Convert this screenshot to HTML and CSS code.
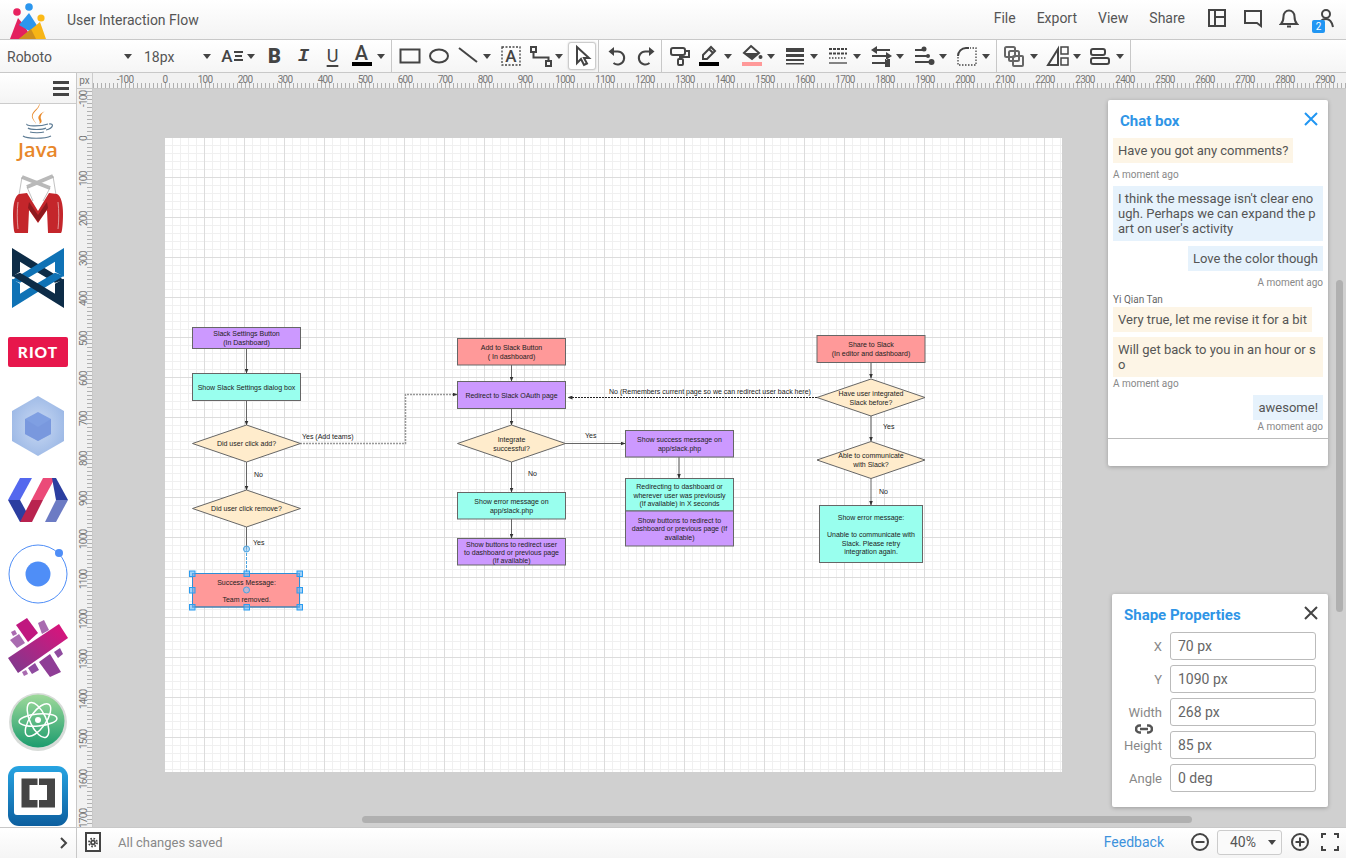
FILE: index.html
```html
<!DOCTYPE html>
<html lang="en">
<head>
<meta charset="utf-8">
<title>User Interaction Flow</title>
<link rel="stylesheet" href="styles.css">
</head>
<body>
<div class="app">
  <header class="topbar">
    <svg class="brand" viewBox="0 0 36 36" width="36" height="36">
      <circle cx="7" cy="9" r="3.8" fill="#e8225f"/>
      <circle cx="19" cy="4" r="3.8" fill="#2b96ee"/>
      <circle cx="31" cy="15" r="3.6" fill="#fbb917"/>
      <polygon points="0,36 8,15 14,22 22,36" fill="#e3215f"/>
      <polygon points="9,22 19,10 28,24 21,29" fill="#2b96ee"/>
      <polygon points="9,36 24,24 30,19 36,36" fill="#f7b516"/>
      <polygon points="9,36 21,26 26,36" fill="#cf8f1e"/>
    </svg>
    <div class="doc-title">User Interaction Flow</div>
    <nav class="menu">
      <span>File</span><span>Export</span><span>View</span><span>Share</span>
    </nav>
    <div class="head-icons">
      <svg class="hi" viewBox="0 0 20 20"><path d="M2 2h16v16H2zM8 2v16M8 9h10"/></svg>
      <svg class="hi" viewBox="0 0 20 20"><path d="M2 3h16v15l-4-3H2z"/></svg>
      <svg class="hi" viewBox="0 0 20 20"><path d="M2 16c2-2 2.500-4 2.500-7.500C4.500 5 7 2.500 10 2.500s5.500 2.500 5.500 6c0 3.500.5 5.500 2.500 7.500zM8 18.500h4"/></svg>
      <div class="user">
        <svg class="hi" viewBox="0 0 20 20"><circle cx="11" cy="6" r="4"/><path d="M3 19c1-5 4-8 8-8s6 3 7 8"/></svg>
        <span class="badge">2</span>
      </div>
    </div>
  </header>

  <div class="toolbar">
    <div class="tb-select tb-font"><span>Roboto</span><i class="caret"></i></div>
    <div class="tb-select tb-size"><span>18px</span><i class="caret"></i></div>
    <div class="tool tool-ae"><span class="gl-ae">A</span><svg class="ic ic-ae" viewBox="0 0 9 12"><path d="M0 2h9M1 6h7M0 10h9"/></svg></div><i class="caret cc"></i>
    <div class="tool"><span class="gl-b">B</span></div>
    <div class="tool"><span class="gl-i">I</span></div>
    <div class="tool"><span class="gl-u">U</span></div>
    <div class="tool tool-a"><span class="gl-a">A</span><b class="colorbar"></b></div><i class="caret cc"></i>
    <div class="sep"></div>
    <div class="tool"><svg class="ic" viewBox="0 0 24 24"><rect x="2.500" y="5.500" width="19" height="13"/></svg></div>
    <div class="tool"><svg class="ic" viewBox="0 0 24 24"><ellipse cx="12" cy="12" rx="9" ry="6.500"/></svg></div>
    <div class="tool"><svg class="ic" viewBox="0 0 24 24"><path d="M3 4l18 14"/></svg></div><i class="caret cc"></i>
    <div class="tool"><svg class="ic" viewBox="0 0 24 24"><rect class="thin dash" x="3" y="3" width="18" height="18"/><text class="ic-text" x="12" y="18">A</text></svg></div>
    <div class="tool"><svg class="ic" viewBox="0 0 24 24"><rect x="3" y="3" width="5" height="5"/><rect x="18" y="17" width="5" height="5"/><path d="M5.500 8v5.500h15V17"/></svg></div><i class="caret cc"></i>
    <div class="tool tool-on"><svg class="ic" viewBox="0 0 24 24"><path d="M7 3v16l4-4 3 6 3-1.500-3-5.500h5z"/></svg></div>
    <div class="sep sep-b"></div>
    <div class="tool"><svg class="ic" viewBox="0 0 24 24"><path d="M8 7.500h4.500a6.500 6.500 0 1 1-4 11.500"/><path class="solid" d="M9 3v9L3.500 7.500z"/></svg></div>
    <div class="tool"><svg class="ic" viewBox="0 0 24 24"><path d="M16 7.500h-4.500a6.500 6.500 0 1 0 4 11.500"/><path class="solid" d="M15 3v9l5.500-4.500z"/></svg></div>
    <div class="sep"></div>
    <div class="tool"><svg class="ic" viewBox="0 0 24 24"><rect x="3" y="4" width="14" height="7" rx="2"/><path d="M17 7h4v6h-9v2"/><rect x="10" y="15" width="5" height="6" rx="1"/></svg></div>
    <div class="tool"><svg class="ic" viewBox="0 0 24 24"><path d="M6 11l8-8 4 4-8 8H6zM12 5l4 4"/><rect class="black" x="2" y="18" width="20" height="4"/></svg></div><i class="caret cc"></i>
    <div class="tool"><svg class="ic" viewBox="0 0 24 24"><path d="M11 2l8 7-7 6-8-6z"/><path class="solid" d="M4 9h15l-7 6z"/><circle class="solid" cx="20.500" cy="13" r="2"/><rect class="pink-bar" x="2" y="18" width="20" height="4"/></svg></div><i class="caret cc"></i>
    <div class="tool"><svg class="ic" viewBox="0 0 24 24"><rect class="solid" x="3" y="4" width="18" height="4"/><rect class="solid" x="3" y="10" width="18" height="3"/><rect class="solid" x="3" y="15" width="18" height="2"/><rect class="solid" x="3" y="19" width="18" height="1.500"/></svg></div><i class="caret cc"></i>
    <div class="tool"><svg class="ic" viewBox="0 0 24 24"><path class="thin dash-s" d="M3 5h18"/><path class="thin dash-s" d="M3 9.500h18"/><path class="thin dot" d="M3 14h18"/><path class="thin" d="M3 19h18"/></svg></div><i class="caret cc"></i>
    <div class="tool"><svg class="ic" viewBox="0 0 24 24"><path d="M6 6h15M3 12h15M3 19h15"/><path class="solid" d="M8 2v8L2 6zM17 8l6 4-6 4zM16 15v8h5v-8z"/></svg></div><i class="caret cc"></i>
    <div class="tool"><svg class="ic" viewBox="0 0 24 24"><path d="M3 6h10M3 12h13M3 18h16"/><circle class="solid" cx="12" cy="5" r="2.500"/><circle class="solid" cx="16" cy="12" r="2"/><circle class="solid" cx="19.500" cy="18" r="3"/></svg></div><i class="caret cc"></i>
    <div class="tool"><svg class="ic" viewBox="0 0 24 24"><path d="M3 12a8 8 0 0 1 8-8h3"/><path class="thin dot" d="M3 13v8h18V4h-6"/></svg></div><i class="caret cc"></i>
    <div class="sep"></div>
    <div class="tool"><svg class="ic ic-grey" viewBox="0 0 24 24"><rect x="2" y="3" width="10" height="10" rx="1.500"/><rect x="6" y="7" width="10" height="10" rx="1.500"/><rect x="10" y="12" width="10" height="10" rx="1"/></svg></div><i class="caret cc"></i>
    <div class="tool"><svg class="ic" viewBox="0 0 24 24"><path d="M2 21L12 5v16zM7 21h5"/><rect class="thin2" x="15" y="3" width="7" height="7"/><rect class="thin2" x="15" y="14" width="7" height="7"/></svg></div><i class="caret cc"></i>
    <div class="tool"><svg class="ic" viewBox="0 0 24 24"><rect x="2" y="5" width="14" height="6" rx="2"/><rect x="2" y="14" width="18" height="6" rx="2"/></svg></div><i class="caret cc"></i>
    <div class="sep"></div>
  </div>

  <div class="main">
    <aside class="side">
      <div class="side-head">
        <svg class="burger" viewBox="0 0 16 15"><path d="M0 0h16v3H0zM0 6h16v3H0zM0 12h16v3H0z"/></svg>
      </div>
      <div class="libs">
        <svg class="lib" viewBox="0 0 60 60">
          <path class="j-flame" d="M31 3c3 5-8 9-6 15 1 3 3 4 3 6-1-3-5-5-4-9 1-5 8-7 7-12z"/>
          <path class="j-flame" d="M37 11c-5 3-8 5-6 9 1 2 1 3 0 4 3-1 3-3 2-5-1-3 1-6 4-8z"/>
          <path class="j-cup" d="M19 24c-2 2 12 3 21 0M20 28c2 2 15 2 18 0M22 32c3 1 11 1 14 0M41 24c5-1 5 4-3 6M15 36c4 3 22 3 28 0"/>
          <text class="j-text" x="30" y="57">Java</text>
        </svg>
        <svg class="lib" viewBox="0 0 60 60">
          <path class="m-bars" d="M14 3l28 11M45 2L19 13" />
          <path class="m-str" d="M14 3l-3 18M45 2l3 19M19 13l6 14M42 14l-7 13"/>
          <path fill="#c4262b" d="M11 20l8-1 11 18 11-18 8 1c4 2 6 10 6 20 0 10-1 19-2 19H40l-1-23-9 13-9-13-1 23H7c-1 0-2-9-2-19 0-10 2-18 6-20z"/>
          <path fill="#8e1a1f" d="M21 28l9 13 9-13 1 6-10 14-10-14z"/>
          <path class="m-seam" d="M10 28c-1 8-1 18 0 27M50 28c1 8 1 18 0 27"/>
        </svg>
        <svg class="lib" viewBox="0 0 60 60">
          <polygon fill="#0d2c47" points="4,0 56,32 47,34.700 20,18.700 12,13.700 12,23.700 4,28.700"/>
          <polygon fill="#0f72b5" points="56,0 4,32 12,34.700 38.700,18.700 47,13.700 47,23.700 56,28.700"/>
          <polygon fill="#0f72b5" points="4,60 56,27.700 47,24.700 20,40.700 12,45.700 12,35.700 4,30.700"/>
          <polygon fill="#0d2c47" points="56,60 4,27.700 12,24.700 38.700,40.700 47,45.700 47,35.700 56,30.700"/>
        </svg>
        <svg class="lib" viewBox="0 0 60 60">
          <rect x="0" y="15" width="60" height="30" rx="2" fill="#e7174c"/>
          <text class="riot" x="30" y="36">RIOT</text>
        </svg>
        <svg class="lib" viewBox="0 0 60 60">
          <defs>
            <radialGradient id="wp" cx="50%" cy="50%" r="55%"><stop offset="0" stop-color="#c9d9f3"/><stop offset="1" stop-color="#9db9e6"/></radialGradient>
          </defs>
          <polygon fill="url(#wp)" points="30,0 56,15 56,45 30,60 4,45 4,15"/>
          <polygon fill="#7f9fe2" points="30,16 43,23 43,38 30,45 17,38 17,23"/>
          <path fill="#7595dc" d="M30 31l13-8v15l-13 7zM30 31L17 23v15l13 7z" opacity=".6"/>
        </svg>
        <svg class="lib" viewBox="0 0 60 60">
          <polygon fill="#5468ee" points="12,8 24,8 12,30 0,30"/>
          <polygon fill="#2b3ea0" points="0,30 12,30 24,52 12,52"/>
          <polygon fill="#eb4a78" points="35,8 47,8 35,30 23.500,30"/>
          <polygon fill="#b9234f" points="23.500,30 35,30 24,52 12,52"/>
          <polygon fill="#2b3ea0" points="44,8 48,8 60,30 48,30"/>
          <polygon fill="#6c7bc4" points="48,30 60,30 48,52 37,52"/>
        </svg>
        <svg class="lib" viewBox="0 0 60 60">
          <circle class="io-ring" cx="30" cy="30" r="29"/>
          <circle cx="30" cy="30" r="12.500" fill="#4f8ef7"/>
          <circle cx="51" cy="9" r="4" fill="#4f8ef7"/>
        </svg>
        <svg class="lib" viewBox="0 0 60 60">
          <defs>
            <linearGradient id="xg" x1="0" y1="1" x2="1" y2="0"><stop offset="0" stop-color="#7a3c8f"/><stop offset="1" stop-color="#e0107a"/></linearGradient>
          </defs>
          <polygon fill="url(#xg)" points="0,40 51,6 60,20 10,55"/>
          <polygon fill="#c0177f" points="8,7 19,0 30,15 20,24"/>
          <polygon fill="#8f3d96" points="31,44 42,36 53,54 42,59"/>
          <polygon fill="#a96bb0" points="30,5 36,2 41,12 34,16"/>
          <polygon fill="#a96bb0" points="2,22 11,16 17,25 9,30"/>
          <polygon fill="#8f4b9f" points="46,34 52,30 55,36 50,40"/>
          <polygon fill="#8f4b9f" points="20,50 27,45 31,52 24,56"/>
          <polygon fill="#a96bb0" points="3,14 7,12 9,16 5,18"/>
          <polygon fill="#a96bb0" points="14,54 18,52 20,56 16,58"/>
        </svg>
        <svg class="lib" viewBox="0 0 60 60">
          <defs>
            <linearGradient id="at" x1="0" y1="0" x2="0" y2="1"><stop offset="0" stop-color="#9ed99a"/><stop offset="1" stop-color="#1c9c6e"/></linearGradient>
          </defs>
          <circle cx="30" cy="30" r="29" fill="#d8dcd9"/>
          <circle cx="30" cy="29" r="26.500" fill="url(#at)"/>
          <ellipse class="at" cx="30" cy="28" rx="8" ry="19" transform="rotate(-25 30 28)"/>
          <ellipse class="at" cx="30" cy="28" rx="8" ry="19" transform="rotate(35 30 28)"/>
          <ellipse class="at" cx="30" cy="28" rx="6" ry="19" transform="rotate(85 30 28)"/>
          <circle cx="30" cy="28" r="3" fill="#fff"/>
        </svg>
        <svg class="lib" viewBox="0 0 60 60">
          <defs>
            <linearGradient id="br" x1="0" y1="0" x2="0" y2="1"><stop offset="0" stop-color="#27a4e2"/><stop offset="1" stop-color="#0d5f9f"/></linearGradient>
          </defs>
          <rect width="60" height="60" rx="11" fill="url(#br)"/>
          <rect x="6" y="6" width="48" height="43" rx="3" fill="#fff"/>
          <path fill="#454545" d="M13.500 12.500H29.500V19H21.500V34H29.500V41.500H13.500zM31 12.500H47V41.500H31V34H39V19H31z"/>
        </svg>
      </div>
    </aside>

    <section class="workspace">
      <div class="ruler-h">
        <span class="ruler-unit">px</span>
        <div class="ruler-h-track">
          <span>-100</span><span>0</span><span>100</span><span>200</span><span>300</span><span>400</span><span>500</span><span>600</span><span>700</span><span>800</span><span>900</span><span>1000</span><span>1100</span><span>1200</span><span>1300</span><span>1400</span><span>1500</span><span>1600</span><span>1700</span><span>1800</span><span>1900</span><span>2000</span><span>2100</span><span>2200</span><span>2300</span><span>2400</span><span>2500</span><span>2600</span><span>2700</span><span>2800</span><span>2900</span>
        </div>
      </div>
      <div class="stage">
        <div class="ruler-v">
          <div class="ruler-v-track">
            <span>-100</span><span>0</span><span>100</span><span>200</span><span>300</span><span>400</span><span>500</span><span>600</span><span>700</span><span>800</span><span>900</span><span>1000</span><span>1100</span><span>1200</span><span>1300</span><span>1400</span><span>1500</span><span>1600</span><span>1700</span>
          </div>
        </div>
        <div class="canvas">
          <div class="paper">
            <svg class="diagram" viewBox="165 138 897 634" width="897" height="634">
              <defs>
                <marker id="ah" markerWidth="5" markerHeight="4" refX="4.500" refY="2" orient="auto" markerUnits="userSpaceOnUse"><path d="M0 0l5 2-5 2z" fill="#333"/></marker>
              </defs>
              <path class="edge" marker-end="url(#ah)" d="M246.500 349v24"/>
              <path class="edge" marker-end="url(#ah)" d="M246.500 400v25"/>
              <path class="edge" marker-end="url(#ah)" d="M246.500 462v28"/>
              <path class="edge" d="M246.500 527v22"/>
              <path class="edge-sel" d="M246.500 549v41"/>
              <path class="edge-dash" marker-end="url(#ah)" d="M300 443.500h105.500V394.500H457"/>
              <path class="edge" marker-end="url(#ah)" d="M511.500 365v16"/>
              <path class="edge" marker-end="url(#ah)" d="M511.500 408v17"/>
              <path class="edge" marker-end="url(#ah)" d="M511.500 462v30"/>
              <path class="edge" marker-end="url(#ah)" d="M511.500 519v19"/>
              <path class="edge" marker-end="url(#ah)" d="M565 443.500h60"/>
              <path class="edge edge-w" marker-end="url(#ah)" d="M679 457v21"/>
              <path class="edge-blk" marker-end="url(#ah)" d="M817 397.500H568"/>
              <path class="edge edge-w" marker-end="url(#ah)" d="M871 362v16"/>
              <path class="edge edge-w" marker-end="url(#ah)" d="M871 416v25"/>
              <path class="edge" marker-end="url(#ah)" d="M871 478v27"/>

              <rect class="n purple" x="192.500" y="327.500" width="108" height="21"/>
              <text class="t" x="246.500" y="336">Slack Settings Button</text>
              <text class="t" x="246.500" y="345">(In Dashboard)</text>
              <rect class="n teal" x="192.500" y="373.500" width="108" height="27"/>
              <text class="t" x="246.500" y="390">Show Slack Settings dialog box</text>
              <polygon class="n cream" points="192.500,443.500 246.500,425 300.500,443.500 246.500,462"/>
              <text class="t" x="246.500" y="446">Did user click add?</text>
              <polygon class="n cream" points="192.500,508.500 246.500,490 300.500,508.500 246.500,527"/>
              <text class="t" x="246.500" y="511">Did user click remove?</text>
              <rect class="n pink" x="192.500" y="573.500" width="107" height="33.500"/>
              <text class="t" x="246.500" y="585">Success Message:</text>
              <text class="t" x="246.500" y="602">Team removed.</text>

              <rect class="n pink" x="457.500" y="338.500" width="108" height="26.500"/>
              <text class="t" x="511.500" y="350">Add to Slack Button</text>
              <text class="t" x="511.500" y="359">( In dashboard)</text>
              <rect class="n purple" x="457.500" y="381.500" width="108" height="27"/>
              <text class="t" x="511.500" y="398">Redirect to Slack OAuth page</text>
              <polygon class="n cream" points="457.500,443.500 511.500,425 565.500,443.500 511.500,462"/>
              <text class="t" x="511.500" y="442">Integrate</text>
              <text class="t" x="511.500" y="451">successful?</text>
              <rect class="n teal" x="457.500" y="492.500" width="108" height="26.500"/>
              <text class="t" x="511.500" y="504">Show error message on</text>
              <text class="t" x="511.500" y="513">app/slack.php</text>
              <rect class="n purple" x="457.500" y="538.500" width="108" height="26.500"/>
              <text class="t" x="511.500" y="547">Show buttons to redirect user</text>
              <text class="t" x="511.500" y="554.500">to dashboard or previous page</text>
              <text class="t" x="511.500" y="563">(If available)</text>

              <rect class="n purple" x="625.500" y="430.500" width="108" height="26.500"/>
              <text class="t" x="679.500" y="442">Show success message on</text>
              <text class="t" x="679.500" y="451">app/slack.php</text>
              <rect class="n teal" x="625.500" y="478.500" width="108" height="32.500"/>
              <text class="t" x="679.500" y="489">Redirecting to dashboard or</text>
              <text class="t" x="679.500" y="498">wherever user was previously</text>
              <text class="t" x="679.500" y="506">(If available) in X seconds</text>
              <rect class="n purple" x="625.500" y="511" width="108" height="35"/>
              <text class="t" x="679.500" y="523">Show buttons to redirect to</text>
              <text class="t" x="679.500" y="531">dashboard or previous page (If</text>
              <text class="t" x="679.500" y="540">available)</text>

              <rect class="n pink" x="817" y="335.500" width="108" height="27"/>
              <text class="t" x="871" y="347">Share to Slack</text>
              <text class="t" x="871" y="356">(In editor and dashboard)</text>
              <polygon class="n cream" points="817,397.500 871,379 925,397.500 871,416"/>
              <text class="t" x="871" y="396">Have user integrated</text>
              <text class="t" x="871" y="405">Slack before?</text>
              <polygon class="n cream" points="817,460 871,441.500 925,460 871,478.500"/>
              <text class="t" x="871" y="458">Able to communicate</text>
              <text class="t" x="871" y="467">with Slack?</text>
              <rect class="n teal" x="819.500" y="505.500" width="103" height="57"/>
              <text class="t" x="871" y="520">Show error message:</text>
              <text class="t" x="871" y="537">Unable to communicate with</text>
              <text class="t" x="871" y="546">Slack. Please retry</text>
              <text class="t" x="871" y="554">integration again.</text>

              <text class="l" x="302" y="438.500">Yes (Add teams)</text>
              <text class="l" x="254" y="476.500">No</text>
              <text class="l" x="253" y="544.500">Yes</text>
              <text class="l" x="585" y="438">Yes</text>
              <text class="l" x="528" y="476">No</text>
              <text class="l" x="609" y="393.500">No (Remembers current page so we can redirect user back here)</text>
              <text class="l" x="883" y="429">Yes</text>
              <text class="l" x="879" y="494">No</text>

              <circle class="hd-c" cx="246.500" cy="549" r="3"/>
              <circle class="hd-c" cx="246.500" cy="590" r="3"/>
              <rect class="sel" x="192.500" y="573.500" width="107" height="33.500"/>
              <rect class="hd" x="189.500" y="571" width="5.500" height="5.500"/>
              <rect class="hd" x="244" y="571" width="5.500" height="5.500"/>
              <rect class="hd" x="297" y="571" width="5.500" height="5.500"/>
              <rect class="hd" x="189.500" y="587.500" width="5.500" height="5.500"/>
              <rect class="hd" x="297" y="587.500" width="5.500" height="5.500"/>
              <rect class="hd" x="189.500" y="604.500" width="5.500" height="5.500"/>
              <rect class="hd" x="244" y="604.500" width="5.500" height="5.500"/>
              <rect class="hd" x="297" y="604.500" width="5.500" height="5.500"/>
            </svg>
          </div>
        </div>

        <div class="scroll-v"></div>
        <div class="scroll-h"></div>

        <div class="panel chat">
          <div class="panel-head">
            <h2 class="panel-title">Chat box</h2>
            <svg class="panel-x x-blue" viewBox="0 0 14 14"><path d="M1 1l12 12M13 1L1 13"/></svg>
          </div>
          <div class="msgs">
            <div class="msg them">Have you got any comments?</div>
            <div class="ts">A moment ago</div>
            <div class="msg me-l">I think the message isn't clear enough. Perhaps we can expand the part on user's activity</div>
            <div class="msg me">Love the color though</div>
            <div class="ts ts-r">A moment ago</div>
            <div class="who">Yi Qian Tan</div>
            <div class="msg them">Very true, let me revise it for a bit</div>
            <div class="msg them">Will get back to you in an hour or so</div>
            <div class="ts ts-near">A moment ago</div>
            <div class="msg me">awesome!</div>
            <div class="ts ts-r ts-near">A moment ago</div>
          </div>
          <div class="chat-input"></div>
        </div>

        <div class="panel props">
          <div class="panel-head">
            <h2 class="panel-title">Shape Properties</h2>
            <svg class="panel-x x-dark" viewBox="0 0 14 14"><path d="M1 1l12 12M13 1L1 13"/></svg>
          </div>
          <div class="fields">
            <div class="field"><label>X</label><div class="val">70 px</div></div>
            <div class="field"><label>Y</label><div class="val">1090 px</div></div>
            <div class="field"><label>Width</label><div class="val">268 px</div></div>
            <div class="field"><label>Height</label><div class="val">85 px</div></div>
            <div class="field"><label>Angle</label><div class="val">0 deg</div></div>
            <svg class="link" viewBox="0 0 18 10"><path d="M6 1.500H4.500a3.500 3.500 0 0 0 0 7H6M12 1.500h1.500a3.500 3.500 0 0 1 0 7H12M5 5h8"/></svg>
          </div>
        </div>
      </div>
    </section>
  </div>

  <footer class="status">
    <div class="status-side">
      <svg class="chev" viewBox="0 0 8 12"><path d="M1 1l5 5-5 5"/></svg>
    </div>
    <div class="status-main">
      <svg class="page-ic" viewBox="0 0 16 20"><rect class="page-frame" x="1" y="1" width="14" height="18"/><circle class="gear-ring" cx="8" cy="10.500" r="4"/><circle class="gear-core" cx="8" cy="10.500" r="2.800"/><circle class="gear-hole" cx="8" cy="10.500" r="1.100"/></svg>
      <span class="saved">All changes saved</span>
      <a class="feedback">Feedback</a>
      <svg class="zoom-ic zoom-out" viewBox="0 0 18 18"><circle cx="9" cy="9" r="8"/><path d="M4.500 9h9"/></svg>
      <div class="zoom-sel"><span>40%</span><i class="caret"></i></div>
      <svg class="zoom-ic" viewBox="0 0 18 18"><circle cx="9" cy="9" r="8"/><path d="M4.500 9h9M9 4.500v9"/></svg>
      <svg class="zoom-ic full" viewBox="0 0 18 18"><path d="M1 5V1h4M13 1h4v4M17 13v4h-4M5 17H1v-4"/></svg>
    </div>
  </footer>
</div>
</body>
</html>
```
FILE: styles.css
```css
* { box-sizing: border-box; }
html, body { margin: 0; height: 100%; overflow: hidden; }
body { font-family: Roboto, "Liberation Sans", sans-serif; color: #555; background: #fff; }
.app { width: 1346px; height: 858px; display: flex; flex-direction: column; overflow: hidden; }

/* top bar */
.topbar { height: 40px; flex: none; display: flex; align-items: center; border-bottom: 1px solid #c8c8c8; background: linear-gradient(#fff, #f3f3f3); padding-left: 10px; }
.brand { margin-top: 3px; flex: none; }
.doc-title { margin-left: 21px; font-size: 14px; color: #555; }
.menu { margin-left: auto; display: flex; gap: 21px; font-size: 14px; color: #555; margin-top: -3px; }
.head-icons { display: flex; align-items: center; gap: 16px; margin-left: 22px; margin-right: 11px; margin-top: -3px; }
.hi { width: 20px; height: 20px; fill: none; stroke: #444; stroke-width: 2; display: block; }
.user { position: relative; }
.badge { position: absolute; left: -3px; top: 12px; width: 13px; height: 13px; border-radius: 2px; background: #2196f3; color: #fff; font-size: 10px; line-height: 13px; text-align: center; }

/* toolbar */
.toolbar { height: 33px; flex: none; display: flex; align-items: center; border-bottom: 1px solid #c8c8c8; background: linear-gradient(#fff, #f5f5f5); }
.tb-select { display: flex; align-items: center; justify-content: space-between; font-size: 14px; color: #555; height: 100%; padding-left: 7px; padding-top: 1px; flex: none; }
.tb-font { width: 137px; padding-right: 5px; }
.tb-size { width: 81px; padding-right: 7px; }
.caret { display: block; width: 0; height: 0; border-left: 4px solid transparent; border-right: 4px solid transparent; border-top: 5px solid #444; flex: none; }
.cc { margin: 0 5px 0 1px; }
.tool { width: 29px; height: 32px; flex: none; display: flex; align-items: center; justify-content: center; position: relative; }
.tool-ae { width: 28px; }
.sep { width: 1px; height: 32px; background: #c8c8c8; margin: 0 3px 0 1px; flex: none; }
.sep-b { margin-left: 2px; }
.tool-on { width: 28px; height: 28px; background: #fff; border: 1px solid #ccc; border-radius: 3px; box-shadow: 0 0 2px rgba(0,0,0,.2); }
.ic { width: 24px; height: 24px; fill: none; stroke: #444; stroke-width: 2; display: block; flex: none; }
.ic .solid { fill: #444; stroke: none; }
.ic .black { fill: #000; stroke: none; }
.ic .pink-bar { fill: #ff9999; stroke: none; }
.ic .thin { stroke-width: 1.300; }
.ic .thin2 { stroke-width: 1.500; }
.ic .dash { stroke-dasharray: 2 1.500; }
.ic .dash-s { stroke-dasharray: 3 1; stroke-width: 2; }
.ic .dot { stroke-dasharray: 1.500 1.500; }
.ic-grey { stroke: #666; }
.ic-text { font: 500 17px Roboto, sans-serif; fill: #444; stroke: none; text-anchor: middle; }
.ic-ae { width: 9px; height: 12px; margin-left: 1px; }
.gl-ae { font: 500 17px/1 Roboto, sans-serif; color: #444; }
.gl-b { font: 900 20px/1 Roboto, sans-serif; color: #444; }
.gl-i { font: italic 700 19px/1 "Liberation Mono", monospace; color: #444; }
.gl-u { font: 400 18px/1 Roboto, sans-serif; color: #444; text-decoration: underline; text-underline-offset: 3px; text-decoration-thickness: 2px; }
.gl-a { font: 500 20px/1 Roboto, sans-serif; color: #444; margin-top: -6px; }
.colorbar { position: absolute; left: 4.500px; width: 20px; top: 22px; height: 4px; background: #000; }

/* main */
.main { flex: 1; min-height: 0; display: flex; }
.side { width: 77px; flex: none; border-right: 1px solid #c8c8c8; display: flex; flex-direction: column; overflow: hidden; background: #fff; }
.side-head { height: 31px; flex: none; display: flex; align-items: center; justify-content: flex-end; padding: 0 7px 0 0; background: linear-gradient(#fff, #f4f4f4); border-bottom: 1px solid #ccc; position: relative; z-index: 1; }
.burger { width: 16px; height: 15px; fill: #444; display: block; }
.libs { display: flex; flex-direction: column; align-items: center; gap: 14px; margin-top: -4px; padding-right: 1px; }
.lib { width: 60px; height: 60px; flex: none; display: block; overflow: visible; }
.j-flame { fill: #e98a2b; }
.j-cup { fill: none; stroke: #5b7a93; stroke-width: 1.200; }
.j-text { font: 600 20px "Open Sans", sans-serif; fill: #e8872a; text-anchor: middle; }
.m-bars { fill: none; stroke: #b9b9b9; stroke-width: 4; }
.m-str { fill: none; stroke: #999; stroke-width: .6; }
.m-seam { fill: none; stroke: #e9b6b6; stroke-width: .8; }
.riot { font: 900 15.500px Lato, sans-serif; fill: #fff; text-anchor: middle; letter-spacing: 1px; }
.io-ring { fill: none; stroke: #4f8ef7; stroke-width: 1; }
.at { fill: none; stroke: #fff; stroke-width: 1.500; }

.workspace { flex: 1; min-width: 0; display: flex; flex-direction: column; }
.ruler-h { height: 16px; flex: none; display: flex; background: #f1f1f1; border-bottom: 1px solid #c8c8c8; overflow: hidden; }
.ruler-unit { width: 16px; flex: none; font-size: 10px; line-height: 15px; text-align: center; color: #777; border-right: 1px solid #ccc; }
.ruler-h-track { flex: 1; display: flex; padding-left: 12px; font-size: 10px; letter-spacing: -.8px; line-height: 13px; color: #777; background-image: repeating-linear-gradient(90deg, #b0b0b0 0 1px, transparent 1px 4px); background-size: 100% 5px; background-position: 0 100%; background-repeat: no-repeat; overflow: hidden; }
.ruler-h-track span { width: 40px; flex: none; text-align: center; }

.stage { flex: 1; min-height: 0; display: flex; position: relative; background: #d0d0d0; overflow: hidden; }
.ruler-v { width: 16px; flex: none; background-color: #f1f1f1; border-right: 1px solid #c8c8c8; overflow: hidden; background-image: repeating-linear-gradient(180deg, #b0b0b0 0 1px, transparent 1px 4px); background-size: 5px 100%; background-position: 100% 2px; background-repeat: no-repeat; }
.ruler-v-track { margin-top: -10px; display: flex; flex-direction: column; font-size: 10px; letter-spacing: -.8px; color: #777; }
.ruler-v-track span { height: 40px; flex: none; writing-mode: vertical-rl; transform: rotate(180deg); text-align: center; line-height: 13px; }
.ruler-v-track span:last-child { height: 29px; text-align: start; }
.canvas { flex: 1; min-width: 0; padding: 49px 0 0 72px; }
.paper { width: 897px; height: 634px; background-color: #fff;
  background-image:
    linear-gradient(#dcdcdc 1px, transparent 1px),
    linear-gradient(90deg, #dcdcdc 1px, transparent 1px),
    linear-gradient(#f0f0f0 1px, transparent 1px),
    linear-gradient(90deg, #f0f0f0 1px, transparent 1px);
  background-size: 40px 40px, 40px 40px, 8px 8px, 8px 8px;
  background-position: -1px -1px; }
.diagram { display: block; }
.n { stroke: #666; stroke-width: 1; }
.purple { fill: #cc99ff; }
.teal { fill: #99ffee; }
.pink { fill: #ff9999; }
.cream { fill: #ffeccc; }
.t, .l { font: 7px "Liberation Sans", Arial, sans-serif; fill: #222; }
.t { text-anchor: middle; }
.edge { fill: none; stroke: #666; stroke-width: 1; }
.edge-w { stroke-width: 1.500; stroke: #888; }
.edge-sel { fill: none; stroke: #4aa3e0; stroke-width: 1; stroke-dasharray: 3 1; }
.edge-dash { fill: none; stroke: #999; stroke-width: 1.500; stroke-dasharray: 2 1; }
.edge-blk { fill: none; stroke: #222; stroke-width: 1; stroke-dasharray: 2 1; }
.sel { fill: none; stroke: #2e8fd8; stroke-width: 1; }
.hd { fill: rgba(100,181,246,.6); stroke: #2b9cf0; stroke-width: 1; }
.hd-c { fill: rgba(144,202,249,.6); stroke: #4aa3e0; stroke-width: 1; }

.scroll-v { position: absolute; right: 3px; top: 191px; width: 7px; height: 332px; background: #b0b0b0; border-radius: 4px; }
.scroll-h { position: absolute; left: 285px; bottom: 4px; width: 830px; height: 7px; background: #b0b0b0; border-radius: 4px; }

.panel { position: absolute; right: 18px; background: #fff; border-radius: 2px; box-shadow: 0 1px 4px rgba(0,0,0,.25); }
.panel-head { height: 38px; flex: none; display: flex; align-items: center; justify-content: space-between; padding: 4px 10px 0 12px; }
.panel-title { margin: 0; font-size: 15px; font-weight: 700; color: #2f95e6; line-height: 20px; }
.panel-x { width: 14px; height: 14px; fill: none; stroke-width: 2; display: block; margin-top: -5px; }
.x-blue { stroke: #2196f3; }
.x-dark { stroke: #444; }

.chat { top: 11px; width: 220px; height: 366px; display: flex; flex-direction: column; }
.msgs { flex: 1; min-height: 0; display: flex; flex-direction: column; padding: 0 5px; align-items: flex-start; }
.msg { padding: 5px; font-size: 13px; line-height: 15px; max-width: 210px; word-break: break-all; color: #555; margin-bottom: 5px; }
.them { background: #fdf5e6; }
.me { background: #e6f2fc; align-self: flex-end; }
.me-l { background: #e6f2fc; }
.ts { font-size: 10px; line-height: 12px; color: #888; margin-top: 1px; margin-bottom: 5px; }
.ts-r { align-self: flex-end; }
.ts-near { margin-top: -4px; margin-bottom: 5px; }
.who { font-size: 10px; line-height: 12px; color: #666; margin-bottom: 1px; }
.chat-input { height: 28px; flex: none; border-top: 1px solid #bbb; }

.props { top: 505px; width: 216px; height: 213px; }
.fields { position: relative; display: flex; flex-direction: column; gap: 5px; padding: 0 12px 0 0; }
.field { display: flex; align-items: center; justify-content: flex-end; gap: 8px; }
.field label { font-size: 13px; color: #888; }
.val { width: 146px; height: 28px; border: 1px solid #bbb; border-radius: 3px; padding-left: 7px; font-size: 14px; line-height: 26px; color: #666; }
.link { position: absolute; left: 23px; top: 92px; width: 18px; height: 10px; fill: none; stroke: #555; stroke-width: 2.500; }

/* status */
.status { height: 31px; flex: none; display: flex; border-top: 1px solid #c8c8c8; background: linear-gradient(#fff, #f5f5f5); }
.status-side { width: 77px; flex: none; border-right: 1px solid #c8c8c8; display: flex; align-items: center; justify-content: flex-end; padding-right: 8px; }
.chev { width: 8px; height: 12px; fill: none; stroke: #444; stroke-width: 2; }
.status-main { flex: 1; display: flex; align-items: center; padding: 0 0 2px 8px; }
.page-ic { width: 16px; height: 20px; flex: none; display: block; }
.page-frame { fill: #fff; stroke: #444; stroke-width: 2; }
.gear-ring { fill: none; stroke: #444; stroke-width: 1.800; stroke-dasharray: 1.600 1.540; }
.gear-core { fill: #444; }
.gear-hole { fill: #fff; }
.saved { margin-left: 17px; font-size: 13px; color: #888; }
.feedback { margin-left: auto; font-size: 14px; color: #3d92dc; }
.zoom-ic { width: 18px; height: 18px; fill: none; stroke: #444; stroke-width: 2; margin-left: 9px; flex: none; display: block; }
.zoom-out { margin-left: 27px; }
.full { margin-left: 12px; margin-right: 7px; }
.zoom-sel { width: 65px; height: 25px; margin-left: 8px; border: 1px solid #ccc; border-radius: 3px; display: flex; align-items: center; padding: 0 5px 0 0; font-size: 14px; color: #555; background: #fafafa; }
.zoom-sel span { width: 55px; text-align: center; }
```
